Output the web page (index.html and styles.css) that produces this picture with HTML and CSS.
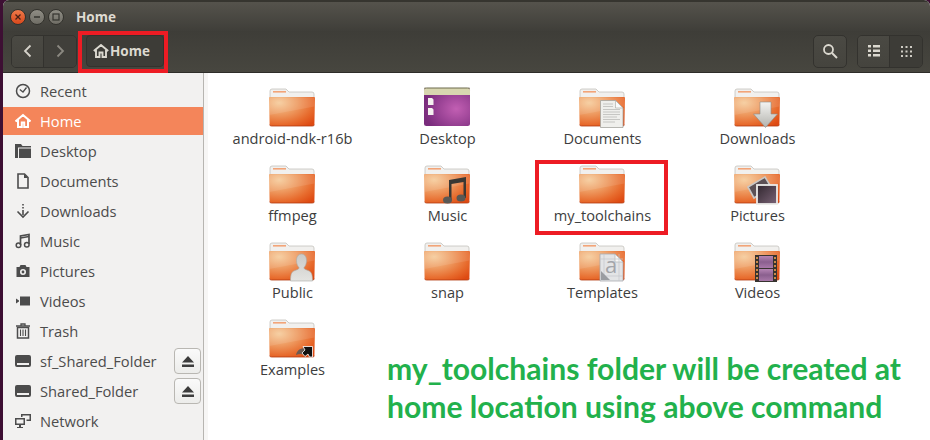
FILE: index.html
```html
<!DOCTYPE html>
<html lang="en">
<head>
  <meta charset="UTF-8">
  <title>Home</title>
  <link rel="stylesheet" href="styles.css">
</head>
<body>
  <!-- shared folder artwork -->
  <svg class="defs" width="0" height="0">
    <defs>
      <radialGradient id="folderFill" cx="0.22" cy="0.2" r="1">
        <stop offset="0" stop-color="#f5cb9a"/>
        <stop offset="0.4" stop-color="#ee9a60"/>
        <stop offset="0.75" stop-color="#e76a2c"/>
        <stop offset="1" stop-color="#de4a12"/>
      </radialGradient>
      <radialGradient id="desktopFill" cx="0.7" cy="0.55" r="0.7">
        <stop offset="0" stop-color="#c25fb3"/>
        <stop offset="1" stop-color="#7a2c7d"/>
      </radialGradient>
      <linearGradient id="arrowFill" x1="0" y1="0" x2="0" y2="1">
        <stop offset="0" stop-color="#f4f4f2"/>
        <stop offset="1" stop-color="#b3b3ae"/>
      </linearGradient>
      <linearGradient id="filmFill" x1="0" y1="0" x2="0" y2="1">
        <stop offset="0" stop-color="#b585b4"/>
        <stop offset="0.5" stop-color="#8a5f8e"/>
        <stop offset="1" stop-color="#a878a9"/>
      </linearGradient>
      <linearGradient id="photoFill" x1="0" y1="0" x2="1" y2="1">
        <stop offset="0" stop-color="#30262e"/>
        <stop offset="1" stop-color="#7b6477"/>
      </linearGradient>
      <linearGradient id="personFill" x1="0" y1="0" x2="0" y2="1">
        <stop offset="0" stop-color="#c9c9c6"/>
        <stop offset="1" stop-color="#e4e4e1"/>
      </linearGradient>
      <symbol id="folder" viewBox="0 0 48 42">
        <path d="M2 5q0-2 2-2h14l3 3h23q2 0 2 2v4H2z" fill="#f1f0ee" stroke="#c4c2bd" stroke-width="0.8"/>
        <rect x="5" y="5" width="13" height="1.6" fill="#f2a478"/>
        <path d="M1 12q0-1 1-1h44q1 0 1 1l-.6 26q0 2-2 2H3.600q-2 0-2-2z" fill="url(#folderFill)"/>
        <path d="M1.200 11.500h45.600l-.3 9L1.500 29z" fill="#fff" opacity="0.1"/>
        <path d="M1.600 38.600q0 1.400 2 1.400h40.800q2 0 2-1.400" fill="none" stroke="#b23a10" stroke-width="0.8"/>
      </symbol>
    </defs>
  </svg>

  <div class="window">
    <header class="titlebar">
      <div class="winbtns">
        <span class="winbtn close">
          <svg width="8" height="8" viewBox="0 0 8 8"><path d="M1.500 1.500l5 5M6.500 1.500l-5 5" stroke="#4a2014" stroke-width="1.300"/></svg>
        </span>
        <span class="winbtn">
          <svg width="8" height="8" viewBox="0 0 8 8"><path d="M1 4h6" stroke="#35342f" stroke-width="1.300"/></svg>
        </span>
        <span class="winbtn">
          <svg width="8" height="8" viewBox="0 0 8 8"><rect x="1" y="1" width="6" height="6" fill="none" stroke="#35342f" stroke-width="1.200"/></svg>
        </span>
      </div>
      <div class="title">Home</div>
    </header>

    <div class="toolbar">
      <div class="btngroup">
        <button class="toolbtn"><svg width="12" height="14" viewBox="0 0 12 14"><path d="M8.500 1.500L3 7l5.500 5.500" fill="none" stroke="#d6d3cb" stroke-width="1.800"/></svg></button>
        <button class="toolbtn dim"><svg width="12" height="14" viewBox="0 0 12 14"><path d="M3.500 1.500L9 7l-5.500 5.500" fill="none" stroke="#8b8981" stroke-width="1.800"/></svg></button>
      </div>
      <button class="pathbtn">
        <svg width="16" height="14" viewBox="0 0 16 14"><path d="M.8 7L8 1l7.200 6M3 6v7h3.500V8.500h3V13H13V6" fill="none" stroke="#dcd9d0" stroke-width="1.900"/></svg>
        <span>Home</span>
      </button>
      <div class="spacer"></div>
      <button class="toolbtn single"><svg width="16" height="16" viewBox="0 0 16 16"><circle cx="6.500" cy="6.500" r="4.500" fill="none" stroke="#dcd9d0" stroke-width="1.800"/><path d="M10 10l5 5" stroke="#dcd9d0" stroke-width="2"/></svg></button>
      <div class="btngroup views">
        <button class="toolbtn"><svg width="12" height="12" viewBox="0 0 12 12"><path d="M0 0h3v2.500H0zM5 0h7v2.500H5zM0 4.500h3V7H0zM5 4.500h7V7H5zM0 9h3v2.500H0zM5 9h7v2.500H5z" fill="#dcd9d0"/></svg></button>
        <button class="toolbtn active"><svg width="11" height="11" viewBox="0 0 11 11"><path d="M0 0h2v2H0zM4.500 0h2v2h-2zM9 0h2v2H9zM0 4.500h2v2H0zM4.500 4.500h2v2h-2zM9 4.500h2v2H9zM0 9h2v2H0zM4.500 9h2v2h-2zM9 9h2v2H9z" fill="#cfccc4"/></svg></button>
      </div>
    </div>

    <div class="main">
      <nav class="sidebar">
        <div class="place">
          <svg width="16" height="16" viewBox="0 0 16 16"><circle cx="8" cy="8" r="6.500" fill="none" stroke="#4c4c4c" stroke-width="1.500"/><path d="M4.800 6.500L8 9l3.500-4.500" fill="none" stroke="#4c4c4c" stroke-width="1.300"/></svg>
          <span>Recent</span>
        </div>
        <div class="place selected">
          <svg width="16" height="16" viewBox="0 0 16 16"><path d="M.5 8.500L8 2l7.500 6.500M3 7v7h3.800V9.500h2.400V14H13V7" fill="none" stroke="#fff" stroke-width="2"/></svg>
          <span>Home</span>
        </div>
        <div class="place">
          <svg width="16" height="16" viewBox="0 0 16 16"><path d="M0 1h6l1.500 2H16v1.500H3V15H0z" fill="#4c4c4c"/><path d="M4 5.500h12V15H4z" fill="#4c4c4c"/></svg>
          <span>Desktop</span>
        </div>
        <div class="place">
          <svg width="16" height="16" viewBox="0 0 16 16"><path d="M3 1h6.500L13 4.500V15H3z" fill="none" stroke="#4c4c4c" stroke-width="1.600"/><path d="M9 1v4h4z" fill="#4c4c4c"/></svg>
          <span>Documents</span>
        </div>
        <div class="place">
          <svg width="16" height="16" viewBox="0 0 16 16"><path d="M8 1v1.500M8 4v1.500M8 7v5" stroke="#4c4c4c" stroke-width="1.600"/><path d="M2.500 8.500L8 14l5.500-5.500" fill="none" stroke="#4c4c4c" stroke-width="1.600"/></svg>
          <span>Downloads</span>
        </div>
        <div class="place">
          <svg width="16" height="16" viewBox="0 0 16 16"><path d="M5.500 12V3l8.500-1.500V11" fill="none" stroke="#4c4c4c" stroke-width="1.700"/><path d="M5.500 5L14 3.500" stroke="#4c4c4c" stroke-width="1.700"/><circle cx="3.500" cy="12.300" r="2.300" fill="none" stroke="#4c4c4c" stroke-width="1.500"/><circle cx="11.800" cy="11.800" r="2.300" fill="none" stroke="#4c4c4c" stroke-width="1.500"/></svg>
          <span>Music</span>
        </div>
        <div class="place">
          <svg width="16" height="16" viewBox="0 0 16 16"><path fill-rule="evenodd" d="M1.500 4h3l1-2h5l1 2h3v10h-13zM8 6a3 3 0 1 0 0 6 3 3 0 0 0 0-6z" fill="#4c4c4c"/><circle cx="8" cy="9" r="1.400" fill="#4c4c4c"/></svg>
          <span>Pictures</span>
        </div>
        <div class="place">
          <svg width="16" height="16" viewBox="0 0 16 16"><path d="M1 5.500l3 2v1l-3 2zM5 3.500h10v9H5z" fill="#4c4c4c"/></svg>
          <span>Videos</span>
        </div>
        <div class="place">
          <svg width="16" height="16" viewBox="0 0 16 16"><path d="M1 3h14M6 3V1h4v2" fill="none" stroke="#4c4c4c" stroke-width="1.300"/><path d="M2.500 4.500h11V15h-11z" fill="none" stroke="#4c4c4c" stroke-width="1.500"/><path d="M5.500 6.500V13M8 6.500V13M10.500 6.500V13" stroke="#4c4c4c" stroke-width="1.100"/></svg>
          <span>Trash</span>
        </div>
        <div class="place">
          <svg width="16" height="16" viewBox="0 0 16 16"><path fill-rule="evenodd" d="M2 2h12q2 0 2 2v8q0 2-2 2H2q-2 0-2-2V4q0-2 2-2zM2 10v2h12v-2z" fill="#4c4c4c"/></svg>
          <span>sf_Shared_Folder</span>
          <button class="eject"><svg width="12" height="11" viewBox="0 0 12 11"><path d="M6 0l6 6.500H0zM0 8.500h12V11H0z" fill="#3c3c3c"/></svg></button>
        </div>
        <div class="place">
          <svg width="16" height="16" viewBox="0 0 16 16"><path fill-rule="evenodd" d="M2 2h12q2 0 2 2v8q0 2-2 2H2q-2 0-2-2V4q0-2 2-2zM2 10v2h12v-2z" fill="#4c4c4c"/></svg>
          <span>Shared_Folder</span>
          <button class="eject"><svg width="12" height="11" viewBox="0 0 12 11"><path d="M6 0l6 6.500H0zM0 8.500h12V11H0z" fill="#3c3c3c"/></svg></button>
        </div>
        <div class="place">
          <svg width="16" height="16" viewBox="0 0 16 16"><path fill-rule="evenodd" d="M0 5h10v7H6v2h2v1H2v-1h2v-2H0zM1.500 6.500v4h7v-4z" fill="#4c4c4c"/><path d="M6 1h10v7h-4.500V6.500h3v-4h-7V4H6z" fill="#4c4c4c"/></svg>
          <span>Network</span>
        </div>
      </nav>

      <section class="files">
        <div class="file">
          <svg class="icon" viewBox="0 0 48 42"><use href="#folder"/></svg>
          <span>android-ndk-r16b</span>
        </div>
        <div class="file">
          <svg class="icon" viewBox="0 0 48 42">
            <rect x="1" y="2" width="46" height="38" rx="2.500" fill="url(#desktopFill)"/>
            <path d="M1 9V4.500Q1 2 3.500 2h41Q47 2 47 4.500V9z" fill="#d8d6b0"/>
            <path d="M1 2.800Q1 2 3.500 2h41q2.500 0 2.500.8" fill="none" stroke="#6d6a4d"/>
            <path d="M5 12h4l1.500 1.500V19H5zM5 22h4l1.500 1.500V29H5z" fill="#f4f1ef"/>
          </svg>
          <span>Desktop</span>
        </div>
        <div class="file">
          <svg class="icon" viewBox="0 0 48 42">
            <use href="#folder"/>
            <path d="M22.500 14.500h15l7.500 7.500v19.500H22.500z" fill="#efefec" stroke="#a5a5a0" stroke-width="0.8"/>
            <path d="M37.500 14.500V22H45z" fill="#fafafa" stroke="#a5a5a0" stroke-width="0.6"/>
            <path d="M25 18h10M25 20.500h10M25 23.500h17M25 26h17M25 28.500h17M25 31h14M25 33.500h17M25 36h12" stroke="#b5b5b1" stroke-width="0.7"/>
          </svg>
          <span>Documents</span>
        </div>
        <div class="file">
          <svg class="icon" viewBox="0 0 48 42">
            <use href="#folder"/>
            <path d="M27 16h11v12h6.500L32.500 41.500 20.500 28H27z" fill="url(#arrowFill)" stroke="#8f8f8a" stroke-width="0.6"/>
          </svg>
          <span>Downloads</span>
        </div>

        <div class="file">
          <svg class="icon" viewBox="0 0 48 42"><use href="#folder"/></svg>
          <span>ffmpeg</span>
        </div>
        <div class="file">
          <svg class="icon" viewBox="0 0 48 42">
            <use href="#folder"/>
            <path d="M26 17l17-3v21h-2.500V19l-12 2v16H26z" fill="#3a3834"/>
            <ellipse cx="24.500" cy="37" rx="4.500" ry="3.500" fill="#5a5854"/>
            <ellipse cx="38" cy="35" rx="4.500" ry="3.500" fill="#5a5854"/>
          </svg>
          <span>Music</span>
        </div>
        <div class="file">
          <svg class="icon" viewBox="0 0 48 42"><use href="#folder"/></svg>
          <span>my_toolchains</span>
        </div>
        <div class="file">
          <svg class="icon" viewBox="0 0 48 42">
            <use href="#folder"/>
            <path d="M15 24l17-10 6 10-17 11z" fill="#5b5055" stroke="#c9c6c4" stroke-width="1.600"/>
            <rect x="24" y="22" width="20" height="19" fill="url(#photoFill)" stroke="#ecebe9" stroke-width="1.800"/>
          </svg>
          <span>Pictures</span>
        </div>

        <div class="file">
          <svg class="icon" viewBox="0 0 48 42">
            <use href="#folder"/>
            <path d="M33.500 14c3.500 0 5 3 5 6.500 0 3-1 5.500-2.500 7 0 1.500 1 2 4 3 3 1 4.500 2.500 4.500 10.500H22.500c0-8 1.500-9.500 4.500-10.500 3-1 4-1.500 4-3-1.500-1.500-2.500-4-2.500-7 0-3.500 1.500-6.500 5-6.500z" fill="url(#personFill)" stroke="#a9a9a6" stroke-width="0.6"/>
          </svg>
          <span>Public</span>
        </div>
        <div class="file">
          <svg class="icon" viewBox="0 0 48 42"><use href="#folder"/></svg>
          <span>snap</span>
        </div>
        <div class="file">
          <svg class="icon" viewBox="0 0 48 42">
            <use href="#folder"/>
            <path d="M22 14h15l8 8v19H22z" fill="#e3e4e6" stroke="#a9abb0" stroke-width="0.8"/>
            <path d="M37 14v8h8z" fill="#f7f7f7" stroke="#a9abb0" stroke-width="0.6"/>
            <path d="M22 19h23M22 36h23M26 14v27M41 14v27" stroke="#c3c5ca" stroke-width="0.7"/>
            <path d="M23 40V31l9 9z" fill="#9a9ca1"/>
            <text class="glyph" x="27" y="33">a</text>
          </svg>
          <span>Templates</span>
        </div>
        <div class="file">
          <svg class="icon" viewBox="0 0 48 42">
            <use href="#folder"/>
            <rect x="22" y="15" width="22" height="27" fill="#37332f"/>
            <rect x="26" y="16" width="14" height="12" fill="url(#filmFill)"/>
            <rect x="26" y="29" width="14" height="12" fill="url(#filmFill)"/>
            <path d="M24 17v24M42 17v24" stroke="#c98a4a" stroke-width="2" stroke-dasharray="2 2"/>
          </svg>
          <span>Videos</span>
        </div>

        <div class="file">
          <svg class="icon" viewBox="0 0 48 42">
            <use href="#folder"/>
            <path d="M28 38c1-5 6-8 11-6l-3 6c-2-1.500-5-1.500-8 0z" fill="#6b5a52"/>
            <path d="M35 29.500h9.500V40h-3l-1.500-3-3 2.500-3-3.500 3-3z" fill="#111" stroke="#fff" stroke-width="0.8"/>
          </svg>
          <span>Examples</span>
        </div>
      </section>
    </div>
  </div>

  <!-- annotations drawn on top of the screenshot -->
  <div class="mark mark-home"></div>
  <div class="mark mark-folder"></div>
  <p class="note">my_toolchains folder will be created at<br>home location using above command</p>
</body>
</html>
```

FILE: styles.css
```css
html, body {
  margin: 0;
  height: 440px;
  overflow: hidden;
}

body {
  position: relative;
  width: 930px;
  background: #3d0f33;
  font-family: "Open Sans", "Noto Sans", sans-serif;
}

.defs {
  display: block;
}

.window {
  display: flex;
  flex-direction: column;
  height: 440px;
  margin-left: 3px;
  border-radius: 6px 6px 0 0;
  overflow: hidden;
  background: #fff;
}

button {
  font-family: inherit;
  padding: 0;
  cursor: pointer;
}

/* title bar */
.titlebar {
  display: flex;
  align-items: center;
  height: 31px;
  box-sizing: border-box;
  padding: 1px 0 0 7px;
  background: linear-gradient(#55534c, #3f3e39);
  border-top: 2px solid #36352f;
}

.winbtns {
  display: flex;
  gap: 3px;
}

.winbtn {
  display: flex;
  align-items: center;
  justify-content: center;
  box-sizing: border-box;
  width: 16px;
  height: 16px;
  border-radius: 50%;
  background: linear-gradient(#8f8d85, #6f6d65);
  border: 0.5px solid #33322d;
}

.winbtn.close {
  background: linear-gradient(#ef7a4a, #d9481c);
}

.title {
  margin-left: 12px;
  font-size: 13.500px;
  font-weight: 700;
  color: #dfdbd2;
}

/* tool bar */
.toolbar {
  display: flex;
  align-items: center;
  height: 42px;
  box-sizing: border-box;
  padding: 0 7px 1px 8px;
  background: linear-gradient(#3e3d38, #47463f);
  border-bottom: 1px solid #2e2d29;
}

.btngroup {
  display: flex;
  border: 1px solid #33322e;
  border-radius: 5px;
  overflow: hidden;
}

.toolbtn {
  display: flex;
  align-items: center;
  justify-content: center;
  width: 32px;
  height: 31px;
  background: linear-gradient(#4a4943, #45443e);
  border: none;
  border-right: 1px solid #33322e;
}

.toolbtn:last-child {
  border-right: none;
}

.toolbtn.dim {
  background: #403f3a;
}

.toolbtn.active {
  background: #3d3c37;
}

.toolbtn.single {
  width: 32px;
  margin-right: 10px;
  border: 1px solid #33322e;
  border-radius: 5px;
  box-sizing: content-box;
}

.pathbtn {
  display: flex;
  align-items: center;
  gap: 1px;
  width: 78px;
  height: 32px;
  margin-left: 9px;
  padding-left: 6px;
  background: #3d3c37;
  border: 1px solid #33322e;
  border-radius: 4px;
  color: #dcd9d0;
  font-size: 13.500px;
  font-weight: 700;
}

.spacer {
  flex: 1;
}

/* sidebar */
.main {
  display: flex;
  flex: 1;
  min-height: 0;
}

.sidebar {
  width: 200px;
  flex: none;
  padding-top: 4px;
  background: #f2f1f0;
  border-right: 1px solid #b7b5b1;
  box-shadow: 4px 0 0 #f7f6f5;
  font-size: 14.700px;
  color: #4c4c4c;
}

.place {
  display: flex;
  align-items: center;
  height: 28px;
  margin-bottom: 2px;
  padding-left: 12px;
}

.place svg {
  flex: none;
}

.place > span {
  flex: 1;
  margin-left: 9px;
}

.place.selected {
  background: #f4855a;
  color: #fff;
}

.eject {
  display: flex;
  align-items: center;
  justify-content: center;
  width: 27px;
  height: 26px;
  margin-right: 2px;
  background: linear-gradient(#fafafa, #ececea);
  border: 1px solid #b9b7b2;
  border-radius: 4px;
}

/* icon view */
.files {
  flex: 1;
  display: grid;
  grid-template-columns: repeat(4, 155px);
  grid-auto-rows: 77px;
  align-content: start;
  padding: 13px 0 0 11px;
  font-size: 14.600px;
  color: #3d3d3d;
}

.file {
  display: flex;
  flex-direction: column;
  align-items: center;
}

.icon {
  display: block;
  width: 48px;
  height: 42px;
  margin-right: 2px;
}

.glyph {
  font-size: 22px;
  fill: #a3a5aa;
}

.file span {
  line-height: 20px;
}

/* annotations */
.mark {
  position: absolute;
  box-sizing: border-box;
  border: 4px solid #ed1c24;
}

.mark-home {
  left: 78px;
  top: 31px;
  width: 90px;
  height: 42px;
}

.mark-folder {
  left: 535px;
  top: 160px;
  width: 133px;
  height: 75px;
}

.note {
  position: absolute;
  left: 387px;
  top: 349px;
  margin: 0;
  font-family: "Lato", sans-serif;
  font-size: 30.100px;
  font-weight: 700;
  line-height: 38px;
  white-space: nowrap;
  color: #22b14c;
}
```
